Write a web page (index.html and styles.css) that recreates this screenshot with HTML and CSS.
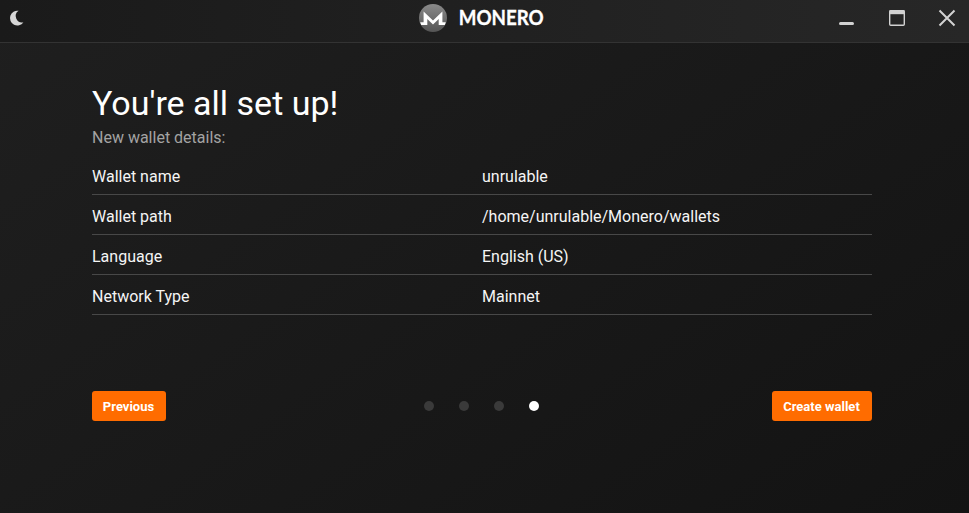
FILE: index.html
```html
<!DOCTYPE html>
<html lang="en">
<head>
<meta charset="utf-8">
<title>Monero</title>
<link rel="stylesheet" href="styles.css">
</head>
<body>
<header class="titlebar">
  <svg class="moon" width="42" height="36" viewBox="0 0 42 36"><path d="M18.6 10.8A7.4 7.4 0 1 0 23.4 22.4A6.4 6.4 0 0 1 18.6 10.8Z" fill="#d6d6d6"/></svg>
  <div class="brand">
    <svg width="160" height="42" viewBox="0 0 160 42" role="img" aria-label="Monero">
      <defs><linearGradient id="disc" x1="0" y1="0" x2="0" y2="1"><stop offset="0" stop-color="#8a8a8a"/><stop offset="1" stop-color="#555"/></linearGradient></defs>
      <circle cx="14" cy="18" r="14" fill="url(#disc)"/>
      <path d="M1.2 22.2H4.6V11.4L14 20.4L23.4 11.4V22.2H26.8L25.8 25H19.7V19L14 24.6L8.3 19V25H2.2Z" fill="#fff"/>
      <text class="wordmark" x="39.7" y="25" textLength="85" lengthAdjust="spacingAndGlyphs">MONERO</text>
    </svg>
  </div>
  <div class="controls">
    <svg width="150" height="36" viewBox="0 0 150 36" fill="none" stroke="#d2d2d2">
      <path d="M21.5 23.5H33.5" stroke-width="3" stroke-linecap="round"/>
      <rect x="70.7" y="10.7" width="14.6" height="14.6" rx="1" stroke-width="1.4"/>
      <path d="M70.5 12.2H85.5" stroke-width="4"/>
      <path d="M120.5 10.5L135.5 25.5M135.5 10.5L120.5 25.5" stroke-width="2"/>
    </svg>
  </div>
</header>
<main class="wizard">
  <h1>You're all set up!</h1>
  <p class="subtitle">New wallet details:</p>
  <dl class="details">
    <div class="row"><dt>Wallet name</dt><dd>unrulable</dd></div>
    <div class="row"><dt>Wallet path</dt><dd>/home/unrulable/Monero/wallets</dd></div>
    <div class="row"><dt>Language</dt><dd>English (US)</dd></div>
    <div class="row"><dt>Network Type</dt><dd>Mainnet</dd></div>
  </dl>
  <nav class="footer">
    <button class="btn btn-prev">Previous</button>
    <div class="steps"><i></i><i></i><i></i><i class="current"></i></div>
    <button class="btn btn-next">Create wallet</button>
  </nav>
</main>
</body>
</html>
```
FILE: styles.css
```css
* { box-sizing: border-box; }
body {
  margin: 0;
  height: 513px;
  overflow: hidden;
  color: #fff;
  font-family: Roboto, sans-serif;
  background: linear-gradient(145deg, #1f1f1f 0%, #131313 100%);
}
.titlebar {
  display: grid;
  grid-template-columns: 419px 1fr 150px;
  height: 43px;
  border-bottom: 1px solid #333;
  background: linear-gradient(90deg, #1a1a1a, #272727);
}
.titlebar svg { display: block; overflow: visible; }
.wordmark { font: bold 20px Lato, sans-serif; fill: #fff; stroke: #fff; stroke-width: 0.3px; }
.wizard { width: 780px; margin-left: 92px; padding-top: 40px; }
h1 { margin: 0; font-size: 34px; font-weight: 400; line-height: 40px; }
.subtitle { margin: 5px 0 0; font-size: 16px; line-height: 20px; color: #a3a3a3; }
.details { margin: 7px 0 0; font-size: 16px; line-height: 20px; color: #f5f5f5; }
.row {
  display: grid;
  grid-template-columns: 1fr 1fr;
  height: 40px;
  padding-top: 12px;
  border-bottom: 1px solid #484848;
}
dd { margin: 0; }
.footer {
  display: grid;
  grid-template-columns: 1fr auto 1fr;
  align-items: center;
  margin-top: 76px;
}
.btn {
  height: 30px;
  padding: 1px 1px 0 0;
  border: 0;
  border-radius: 3px;
  background: #ff6c00;
  color: #fff;
  font: bold 13px Roboto, sans-serif;
}
.btn-prev { width: 74px; }
.btn-next { width: 100px; justify-self: end; }
.steps { display: flex; gap: 25px; padding-right: 1px; }
.steps i { width: 10px; height: 10px; border-radius: 50%; background: #3a3a3a; }
.steps .current { background: #fff; }
```
